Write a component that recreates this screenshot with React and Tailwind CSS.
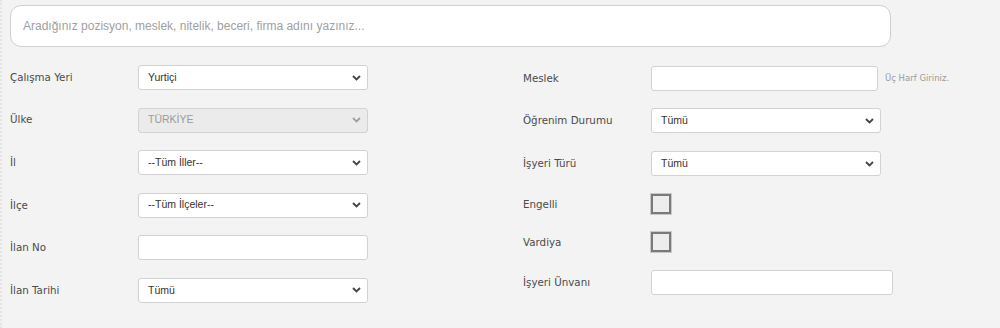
import React from "react";

const Chevron = ({ light }) => (
  <svg width="9" height="6" viewBox="0 0 9 6" className="absolute right-[6px] top-1/2 -translate-y-1/2">
    <path d="M1 1 L4.5 4.5 L8 1" fill="none" stroke={light ? "#a0a0a0" : "#444"} strokeWidth="1.8" />
  </svg>
);

const Select = ({ value, width = "w-[230px]", disabled }) => (
  <div
    className={`relative h-[25px] ${width} rounded-[3px] border border-[#d2d2d2] flex items-center pl-[9px] text-[10.5px] ${
      disabled ? "bg-[#ebebeb] text-[#9a9a9a]" : "bg-white text-[#333]"
    }`}
    style={{ fontFamily: '"Liberation Sans", Arial, sans-serif' }}
  >
    {value}
    <Chevron light={disabled} />
  </div>
);

const Input = ({ width = "w-[230px]" }) => (
  <div className={`h-[25px] ${width} rounded-[3px] border border-[#d2d2d2] bg-white`} />
);

const Check = () => (
  <div className="w-[20px] h-[20px] border-2 border-[#7a7a7a] bg-[#ededed] shadow-[0_0_0_1px_#c8c8c8]" />
);

const Label = ({ children, className = "" }) => (
  <div className={`w-[128px] shrink-0 text-[10.3px] text-[#4a4a4a] ${className}`}>{children}</div>
);

export default function App() {
  return (
    <div
      className="w-[1000px] h-[328px] bg-[#f3f3f3] pt-[5px] pl-[10px] border-l-2 border-dotted border-[#e4e4e4] overflow-hidden"
      style={{ fontFamily: '"DejaVu Sans", Verdana, sans-serif' }}
    >
      <div
        className="w-[881px] h-[42px] ml-[-2px] rounded-[11px] border border-[#d0d0d0] bg-white flex items-center pl-[12px] text-[12px] text-[#a0a0a0]"
        style={{ fontFamily: '"Liberation Sans", Arial, sans-serif' }}
      >
        Aradığınız pozisyon, meslek, nitelik, beceri, firma adını yazınız...
      </div>

      <div className="flex mt-[18px] ml-[-2px]">
        <div className="w-[513px] flex flex-col gap-[17.6px]">
          <div className="flex items-center h-[25px]">
            <Label>Çalışma Yeri</Label>
            <Select value="Yurtiçi" />
          </div>
          <div className="flex items-center h-[25px]">
            <Label>Ülke</Label>
            <Select value="TÜRKİYE" disabled />
          </div>
          <div className="flex items-center h-[25px]">
            <Label>İl</Label>
            <Select value="--Tüm İller--" />
          </div>
          <div className="flex items-center h-[25px]">
            <Label>İlçe</Label>
            <Select value="--Tüm İlçeler--" />
          </div>
          <div className="flex items-center h-[25px]">
            <Label>İlan No</Label>
            <Input />
          </div>
          <div className="flex items-center h-[25px]">
            <Label>İlan Tarihi</Label>
            <Select value="Tümü" />
          </div>
        </div>

        <div className="flex flex-col pt-[1px]">
          <div className="flex items-center h-[25px]">
            <Label>Meslek</Label>
            <Input width="w-[227px]" />
            <span className="ml-[7px] text-[8.5px] text-[#9a9a9a]">Üç Harf Giriniz.</span>
          </div>
          <div className="flex items-center h-[25px] mt-[17px]">
            <Label>Öğrenim Durumu</Label>
            <Select value="Tümü" width="w-[230px]" />
          </div>
          <div className="flex items-center h-[25px] mt-[18px]">
            <Label>İşyeri Türü</Label>
            <Select value="Tümü" width="w-[230px]" />
          </div>
          <div className="flex items-center h-[25px] mt-[15px]">
            <Label className="pt-[3px]">Engelli</Label>
            <Check />
          </div>
          <div className="flex items-center h-[25px] mt-[13px]">
            <Label className="pt-[3px]">Vardiya</Label>
            <Check />
          </div>
          <div className="flex items-center h-[25px] mt-[16px]">
            <Label>İşyeri Ünvanı</Label>
            <Input width="w-[242px]" />
          </div>
        </div>
      </div>
    </div>
  );
}
